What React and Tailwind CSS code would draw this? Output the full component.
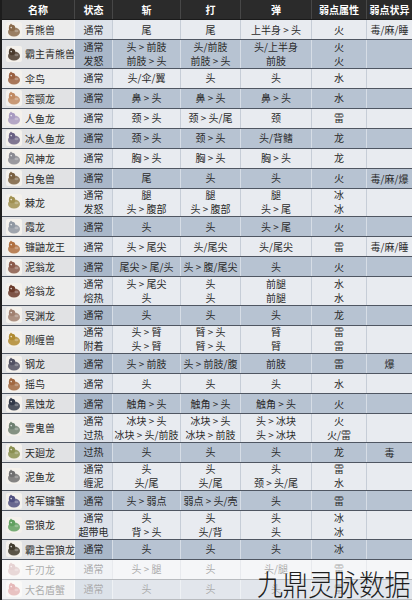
import React from "react";

const FONT = "font-['Noto_Sans_CJK_SC','Noto_Sans',sans-serif]";

// widths: name, state, 斩, 打, 弹, 属性, 状异
const W = ["w-[73px]", "w-[38px]", "w-[68px]", "w-[60px]", "w-[71px]", "w-[55px]", "w-[45px]"];

const HEAD = ["名称", "状态", "斩", "打", "弹", "弱点属性", "弱点状异"];

const ROWS = [
  { name: "青熊兽", c: "#8a6a4a", lines: [["通常", "尾", "尾", "上半身 > 头", "火"]], st: "毒/麻/睡" },
  {
    name: "霸主青熊兽",
    c: "#4a3a2c",
    lines: [
      ["通常", "头 > 前肢", "头/前肢", "头/上半身", "火"],
      ["发怒", "前肢 > 头", "前肢 > 头", "前肢", "火"],
    ],
  },
  { name: "伞鸟", c: "#9a6040", lines: [["通常", "头/伞/翼", "头", "头", "水"]] },
  { name: "蛮颚龙", c: "#c08a62", lines: [["通常", "鼻 > 头", "鼻 > 头", "鼻 > 头", "水"]] },
  { name: "人鱼龙", c: "#a89ac0", lines: [["通常", "颈 > 头", "颈 > 头/尾", "颈", "雷"]] },
  { name: "冰人鱼龙", c: "#6a6082", lines: [["通常", "颈 > 头", "颈 > 头", "头/背鳍", "龙"]] },
  { name: "风神龙", c: "#8a8a92", lines: [["通常", "胸 > 头", "胸 > 头", "胸 > 头", "龙"]] },
  { name: "白兔兽", c: "#7a6040", lines: [["通常", "尾", "头", "头", "火"]], st: "毒/麻/爆" },
  {
    name: "棘龙",
    c: "#a09050",
    lines: [
      ["通常", "腿", "腿", "腿", "冰"],
      ["发怒", "头 > 腹部", "头 > 腹部", "头 > 尾", "冰"],
    ],
  },
  { name: "霞龙", c: "#9098a2", lines: [["通常", "头", "头", "头 > 尾", "火"]] },
  { name: "镰鼬龙王", c: "#b07040", lines: [["通常", "头 > 尾尖", "头/尾尖", "头/尾尖", "雷"]], st: "毒/麻/睡" },
  { name: "泥翁龙", c: "#8a5a4a", lines: [["通常", "尾尖 > 尾/头", "头 > 腹/尾尖", "头", "火"]] },
  {
    name: "熔翁龙",
    c: "#6a3a2a",
    lines: [
      ["通常", "头 > 尾尖", "头", "前腿", "水"],
      ["熔热", "头", "头", "前腿", "水"],
    ],
  },
  { name: "冥渊龙", c: "#a08070", lines: [["通常", "头", "头", "头", "龙"]] },
  {
    name: "刚缠兽",
    c: "#b08a30",
    lines: [
      ["通常", "头 > 臂", "臂 > 头", "臂", "雷"],
      ["附着", "头 > 臂", "臂 > 头", "臂", "雷"],
    ],
  },
  { name: "钢龙", c: "#505062", lines: [["通常", "头 > 前肢", "头 > 前肢/腹", "前肢", "雷"]], st: "爆" },
  { name: "摇鸟", c: "#a06840", lines: [["通常", "头", "头", "头", "水"]] },
  { name: "黑蚀龙", c: "#303848", lines: [["通常", "触角 > 头", "触角 > 头", "触角 > 头", "火"]] },
  {
    name: "雪鬼兽",
    c: "#708070",
    lines: [
      ["通常", "冰块 > 头", "冰块 > 头", "头 > 冰块", "火"],
      ["过热", "冰块 > 头/前肢", "冰块 > 前肢", "头 > 冰块", "火/雷"],
    ],
  },
  { name: "天廻龙", c: "#8a9050", lines: [["过热", "头", "头", "头", "龙"]], st: "毒" },
  {
    name: "泥鱼龙",
    c: "#707070",
    lines: [
      ["通常", "头", "头", "头", "雷"],
      ["缠泥", "头/尾", "头/尾", "颈 > 头/尾", "水"],
    ],
  },
  { name: "将军镰蟹", c: "#505080", lines: [["通常", "头 > 弱点", "弱点 > 头/壳", "头", "雷"]] },
  {
    name: "雷狼龙",
    c: "#60a060",
    lines: [
      ["通常", "头", "头", "头", "冰"],
      ["超带电", "背 > 头", "头/背", "头", "冰"],
    ],
  },
  { name: "霸主雷狼龙", c: "#403a2c", lines: [["通常", "头", "头", "头", "冰"]] },
  { name: "千刃龙", c: "#c09090", lines: [["通常", "头 > 腿", "头", "头/腿", "雷"]], faded: true },
  { name: "大名盾蟹", c: "#c05050", lines: [["通常", "头", "头", "头", "雷"]], faded: true },
];

function MonsterIcon({ color }) {
  return (
    <svg width="16" height="16" viewBox="0 0 16 16" className="shrink-0">
      <rect x="0" y="0" width="16" height="16" rx="2" fill="#f4f1ec" />
      <ellipse cx="8" cy="10" rx="6" ry="4.5" fill={color} opacity="0.85" />
      <circle cx="6" cy="6" r="3.2" fill={color} />
      <path d="M3 4 L5 1.5 L6.5 3.5 Z" fill={color} />
      <circle cx="5.2" cy="5.6" r="0.8" fill="#fff" opacity="0.8" />
      <ellipse cx="10.5" cy="9" rx="2" ry="1.2" fill="#fff" opacity="0.25" />
    </svg>
  );
}

function Row({ row, dark }) {
  const double = row.lines.length > 1;
  const h = double ? "h-[28.5px]" : "h-[20px]";
  const nameBg = dark ? "bg-[#e1e2e4]" : "bg-[#ececec]";
  const stateBg = dark ? "bg-[#a9b7c9]" : "bg-[#dde2ea]";
  const cellBg = dark ? "bg-[#b7c3d2]" : "bg-[#e8ebf0]";
  const sep = dark ? "border-[#d6dde6]" : "border-[#c6cdd7]";
  return (
    <div className={`flex ${h} border-b border-[#4f5662] ${row.faded ? "opacity-40" : ""}`}>
      <div className={`${W[0]} ${nameBg} flex items-center gap-[3px] pl-[4px] border-r border-[#f4f4f4]`}>
        <MonsterIcon color={row.c} />
        <span className="text-[10px] text-[#2b2b2b] whitespace-nowrap">{row.name}</span>
      </div>
      {[0, 1, 2, 3, 4].map((ci) => (
        <div
          key={ci}
          className={`${W[ci + 1]} ${ci === 0 ? stateBg : cellBg} border-r ${sep} flex flex-col justify-center items-center`}
        >
          {row.lines.map((l, li) => (
            <span key={li} className="text-[10px] leading-[14px] text-[#2a2a2a] whitespace-nowrap">
              {l[ci]}
            </span>
          ))}
        </div>
      ))}
      <div className={`${W[6]} ${cellBg} flex items-center justify-center`}>
        <span className="text-[10px] text-[#2a2a2a] whitespace-nowrap">{row.st || ""}</span>
      </div>
    </div>
  );
}

export default function App() {
  return (
    <div className={`relative w-[412px] h-[600px] overflow-hidden bg-white ${FONT}`}>
      <div className="border-l-2 border-[#1c1c1c]">
        <div className="flex h-[20px] bg-[#2b2b2b] border-b border-[#1a1a1a]">
          {HEAD.map((t, i) => (
            <div
              key={t}
              className={`${W[i]} flex items-center justify-center text-[10px] font-bold text-white ${i < 6 ? "border-r border-[#474747]" : ""}`}
            >
              {t}
            </div>
          ))}
        </div>
        {ROWS.map((r, i) => (
          <Row key={r.name} row={r} dark={i % 2 === 1} />
        ))}
      </div>
      <div className="absolute right-[2px] bottom-[2px] text-[26px] leading-none font-light text-[#1e1e1e] tracking-[-0.5px] scale-y-[1.12] origin-bottom">
        九鼎灵脉数据
      </div>
    </div>
  );
}
